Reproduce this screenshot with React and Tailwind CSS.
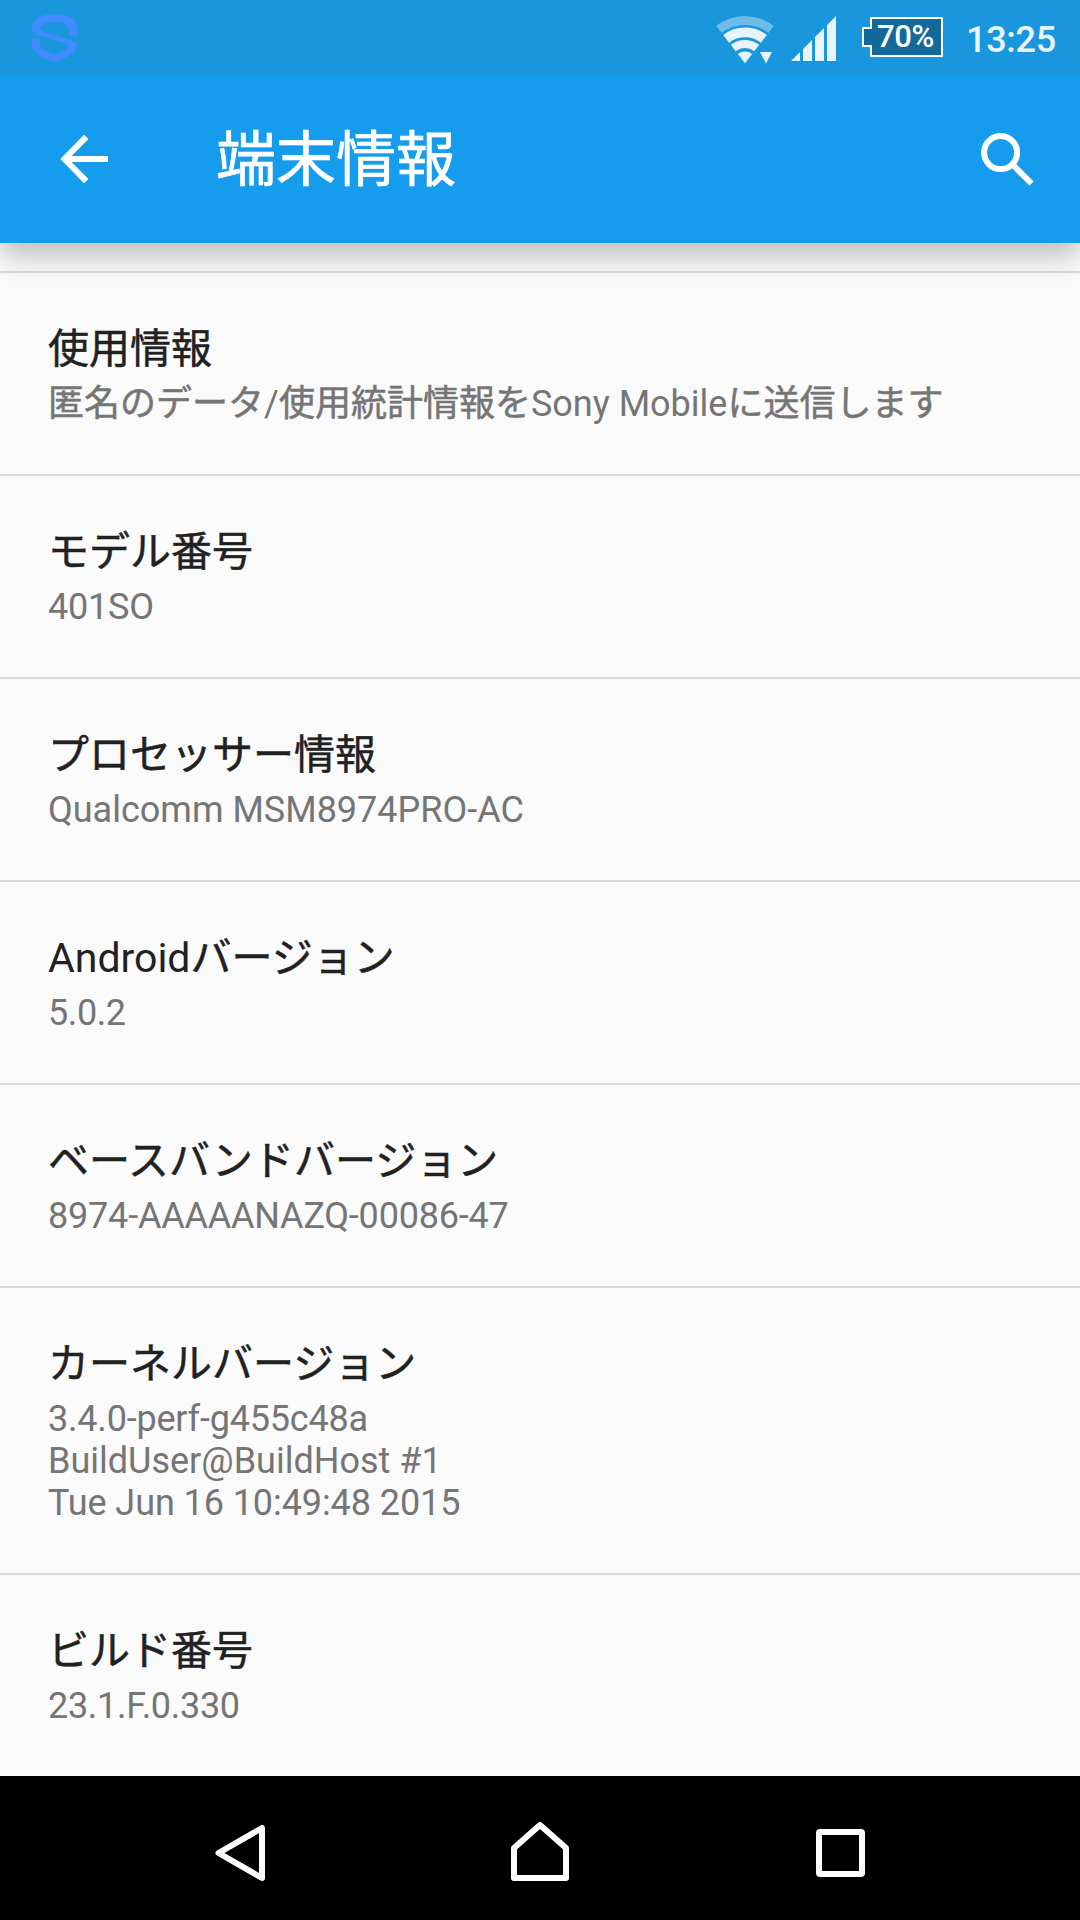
const items = [
    { title: '使用情報', summary: [{ text: '匿名のデータ/使用統計情報をSony Mobileに送信します' }] },
    { title: 'モデル番号', summary: [{ text: '401SO', tracking: 'tracking-[-0.2px]' }] },
    { title: 'プロセッサー情報', summary: [{ text: 'Qualcomm MSM8974PRO-AC' }] },
    { title: 'Androidバージョン', summary: [{ text: '5.0.2', tracking: 'tracking-[-0.4px]' }] },
    { title: 'ベースバンドバージョン', summary: [{ text: '8974-AAAAANAZQ-00086-47', tracking: 'tracking-[-0.2px]' }] },
    {
        title: 'カーネルバージョン',
        summary: [
            { text: '3.4.0-perf-g455c48a', tracking: 'tracking-[-0.2px]' },
            { text: 'BuildUser@BuildHost #1' },
            { text: 'Tue Jun 16 10:49:48 2015', tracking: 'tracking-[-0.08px]' },
        ],
    },
    { title: 'ビルド番号', summary: [{ text: '23.1.F.0.330', tracking: 'tracking-[-0.3px]' }] },
];

// Japanese runs get a hairline stroke so they weigh the same as Roboto
const MixedText = ({ text }) =>
    text.split(/([^ -~]+)/).map((part, i) =>
        i % 2 ? (
            <span key={i} className="[-webkit-text-stroke:0.5px_currentColor]">
                {part}
            </span>
        ) : (
            part
        )
    );

const StatusBar = () => (
    <div className="relative z-10 flex h-[75px] items-start justify-between bg-[#1a96dc] pl-[30px] pr-[24px]">
        <svg className="mt-[12px]" width="50" height="52" viewBox="90 36 150 156" fill="#3f8bff">
            <path d="M231 107V86C231 56 205 43 162 43C120 43 96 56 96 86C96 98 104 102 118 106L184 127C200 132 205 135 205 141C205 150 180 156 162 164C140 156 119 145 119 126V114H95V130C95 162 125 172 162 187C200 172 231 160 231 136C231 128 226 126 212 121L140 98C126 94 121 92 121 86C121 72 135 67 162 67C190 67 207 72 207 92V107Z" />
        </svg>
        <div className="flex items-start">
            <svg className="mt-[16px]" width="58" height="48" viewBox="0 0 58 48" fill="#e8f3fc">
                <path opacity=".4" d="M.2 9.800A47.300 47.300 0 0 1 57.800 9.800L52.400 16.900A38.300 38.300 0 0 0 5.600 16.900Z" />
                <path d="M7.200 19A35.700 35.700 0 0 1 50.800 19L44.900 26.700A26 26 0 0 0 13.100 26.700Z" />
                <path d="M14.800 28.800A23.300 23.300 0 0 1 43.200 28.800L38.300 35.200A15.200 15.200 0 0 0 19.700 35.200Z" />
                <path d="M21.900 38A11.700 11.700 0 0 1 36.100 38L29 47.300Z" />
                <path d="M44 36H56L50 47.500Z" />
            </svg>
            <svg className="ml-[17px] mt-[16px]" width="45" height="45" viewBox="0 0 45 45" fill="#e8f3fc">
                <path d="M0 45L9 36V45ZM12 45V33L21 24V45ZM24 45V21L33 12V45ZM36 45V9L45 0V45Z" />
            </svg>
            <div className="relative ml-[26px] mt-[17px] h-[40px] w-[81px]">
                <svg className="block" width="81" height="40" viewBox="0 0 81 40">
                    <path
                        d="M9 1H80V39H9V29H1V11H9Z"
                        fill="#12699a"
                        stroke="#fff"
                        strokeWidth="2"
                        strokeLinejoin="round"
                    />
                </svg>
                <span className="absolute inset-y-0 left-[6px] right-0 text-center text-[31px] font-medium leading-[40px] tracking-[-0.3px] text-white">
                    70%
                </span>
            </div>
            <span className="ml-[23px] mt-[19px] w-[90px] whitespace-nowrap text-[36px] font-medium leading-[43px] tracking-[-0.3px] text-[#e8f3fc]">
                13:25
            </span>
        </div>
    </div>
);

const AppBar = () => (
    <div className="relative flex h-[168px] items-center justify-between bg-[#159cec] pl-[60px] pr-[46px] shadow-[0_12px_28px_rgba(0,0,0,0.25)]">
        <div className="flex items-center">
            <svg width="48" height="48" viewBox="0 0 48 48" fill="none" stroke="#fff" strokeWidth="6">
                <path d="M26.300 1.800L4.500 24L26.300 46.200M4.500 24H48" />
            </svg>
            <h1 className="ml-[108px] pt-[3px] text-[60px] leading-[70px] text-white [-webkit-text-stroke:0.7px_currentColor]">
                端末情報
            </h1>
        </div>
        <svg width="53" height="53" viewBox="0 0 53 53" fill="none" stroke="#fff" strokeWidth="6">
            <circle cx="19.600" cy="19.600" r="16.500" />
            <path d="M33 33L50.500 50.500" />
        </svg>
    </div>
);

const InfoRow = ({ title, summary }) => (
    <li className="border-t-2 border-[#dadada] px-[48px] pb-[49px] pt-[52px]">
        <p className="text-[41px] leading-[48px] text-[#212121]">
            <MixedText text={title} />
        </p>
        <div className="mt-[10px] text-[36px] leading-[42px] text-[#757575]">
            {summary.map((line) => (
                <p key={line.text} className={line.tracking}>
                    <MixedText text={line.text} />
                </p>
            ))}
        </div>
    </li>
);

const NavBar = () => (
    <div className="flex h-[144px] items-center bg-black pl-[215px] pt-[10px]">
        <svg width="50" height="58" viewBox="0 0 50 58" fill="none" stroke="#fff" strokeWidth="6" strokeLinejoin="round">
            <path d="M3.500 29L47 4V54Z" />
        </svg>
        <svg
            className="mb-[4px] ml-[246px]"
            width="58"
            height="60"
            viewBox="0 0 58 60"
            fill="none"
            stroke="#fff"
            strokeWidth="6"
            strokeLinejoin="round"
        >
            <path d="M29 4L55 27V57H3V27Z" />
        </svg>
        <div className="ml-[247px] h-[48px] w-[49px] rounded-[4px] border-[6px] border-white" />
    </div>
);

export default function App() {
    return (
        <div className="flex h-[1920px] w-[1080px] flex-col overflow-hidden bg-[#fafafa] font-[Roboto,'Noto_Sans_CJK_JP',sans-serif]">
            <StatusBar />
            <AppBar />
            <ul className="flex-1 pt-[28px]">
                {items.map((item) => (
                    <InfoRow key={item.title} title={item.title} summary={item.summary} />
                ))}
            </ul>
            <NavBar />
        </div>
    );
}
